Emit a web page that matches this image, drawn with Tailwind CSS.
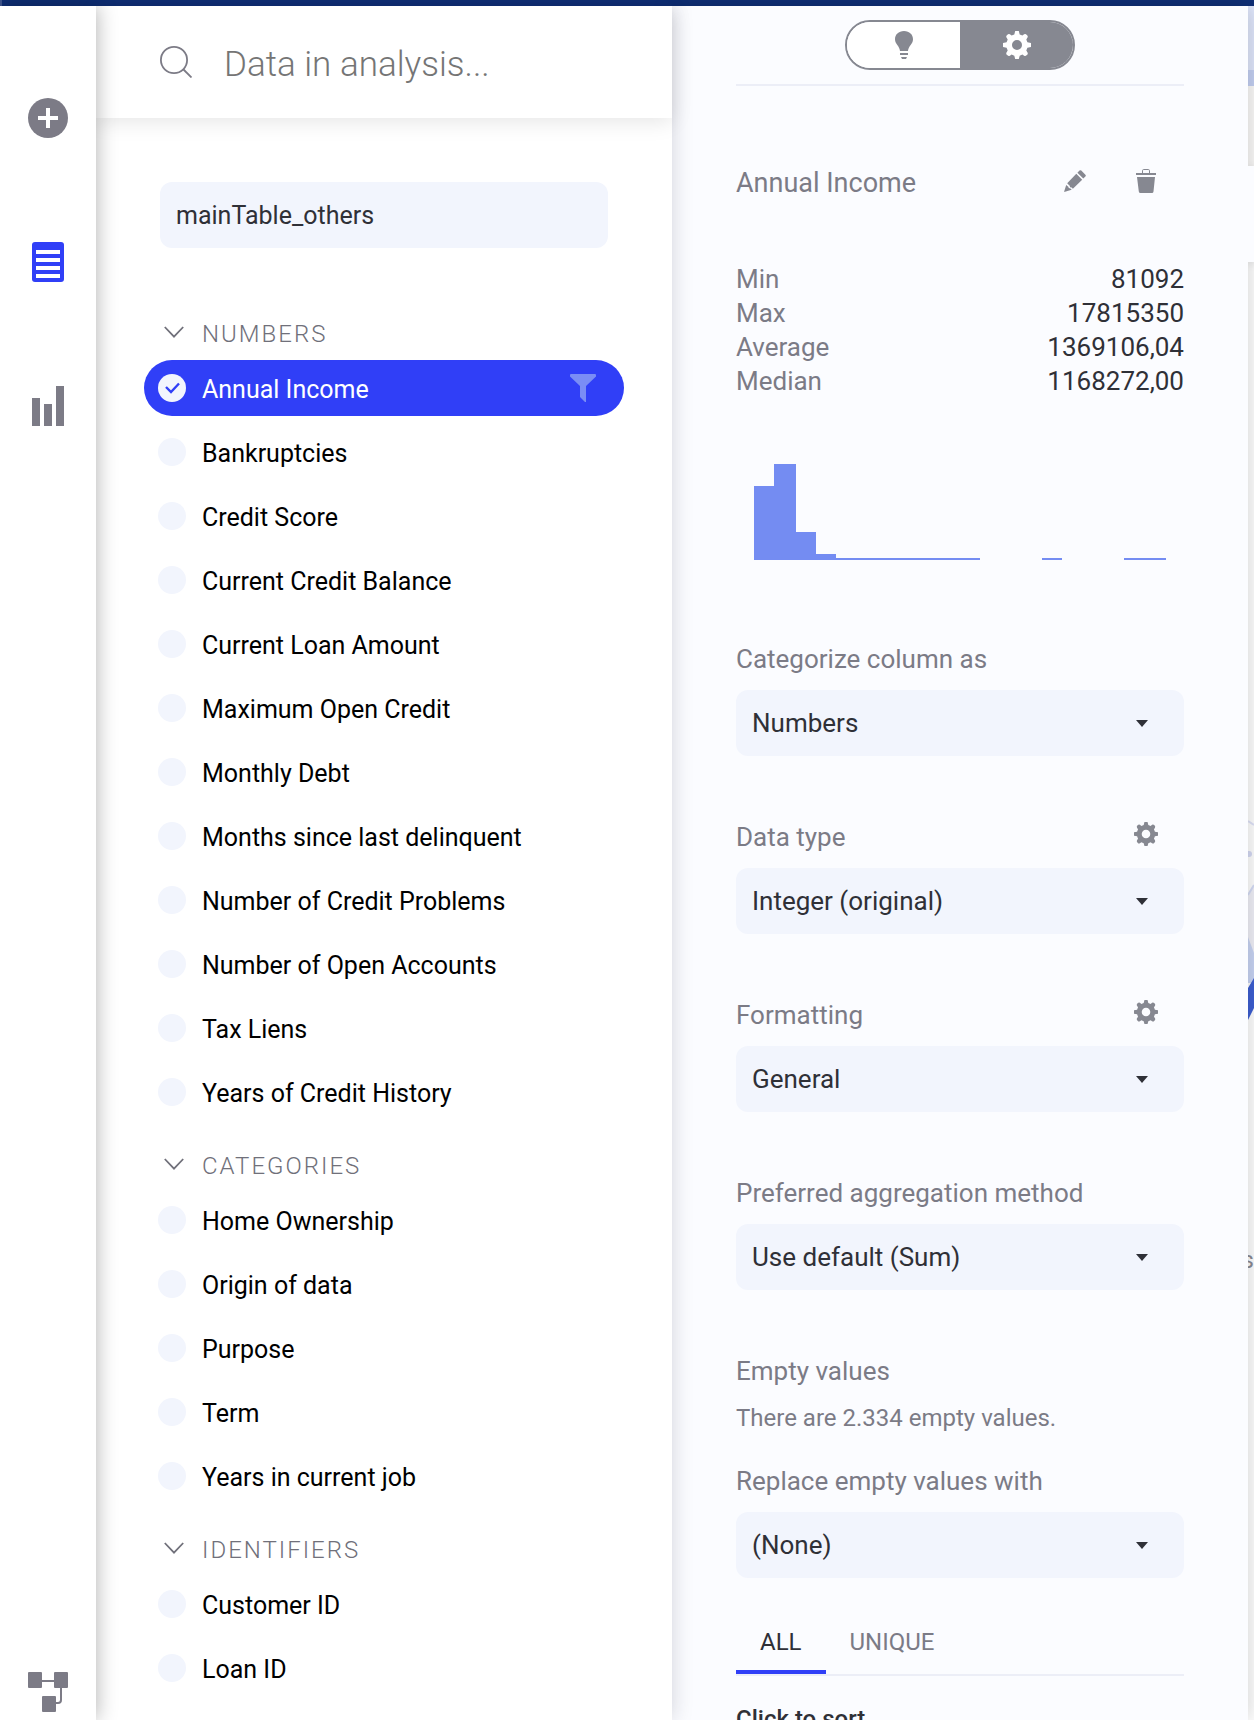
<!DOCTYPE html>
<html lang="en">
<head>
<meta charset="utf-8">
<meta name="viewport" content="width=device-width, initial-scale=1">
<title>Data in analysis</title>
<script src="https://cdn.jsdelivr.net/npm/@tailwindcss/browser@4"></script>
</head>
<body class="flex h-screen flex-col overflow-hidden bg-white font-[Roboto,sans-serif] text-[26px] leading-[34px] text-[#2f3037]">
<svg class="hidden" aria-hidden="true">
  <symbol id="chevron" viewBox="0 0 20 12"><path d="M.8 1 10 10.600 19.200 1" fill="none" stroke="currentColor" stroke-width="1.800"/></symbol>
  <symbol id="caret" viewBox="0 0 12 7"><path d="M0 0h12L6 7z" fill="currentColor"/></symbol>
  <symbol id="gear" viewBox="0 0 28 28"><path fill="currentColor" fill-rule="evenodd" d="M12.200 0h3.600l.9 3.500 2.700 1.100 1.700-1.400q1.500-.8 2.700.7 1.500 1.200.7 2.700l-1.200 1.900 1.100 2.800 3.600.8v3.800l-3.600.8-1.100 2.800 1.200 1.900q.8 1.500-.7 2.700-1.200 1.500-2.700.7l-1.700-1.200-2.700 1.100-.9 3.300h-3.600l-.9-3.300-2.700-1.100-1.700 1.200q-1.500.8-2.700-.7-1.500-1.200-.7-2.700l1.200-1.900-1.100-2.800L0 15.900v-3.800l3.600-.8 1.100-2.800-1.200-1.900q-.8-1.500.7-2.700 1.200-1.500 2.700-.7l1.700 1.400 2.700-1.100zM14 9a5 5 0 1 0 0 10a5 5 0 1 0 0-10z"/></symbol>
</svg>

<div class="h-1.5 shrink-0 border-l-2 border-[#3f5690] bg-[#0f2f76]"></div>

<div class="grid min-h-0 flex-1 grid-cols-[96px_minmax(0,1fr)_minmax(0,1fr)_6px] grid-rows-[minmax(0,1fr)]">
  <nav class="relative z-30 flex flex-col items-center bg-white pt-[92px] pb-2 text-[#7c7b86] shadow-[0_0_20px_rgba(0,0,0,0.32)]" aria-label="Main">
    <div class="flex flex-col gap-[104px]">
      <button type="button" aria-label="Add"><svg class="size-10" viewBox="0 0 40 40"><circle cx="20" cy="20" r="20" fill="currentColor"/><path d="M20 10v20M10 20h20" stroke="#fff" stroke-width="4"/></svg></button>
      <button type="button" aria-label="Data" class="text-[#303ff7]"><svg class="size-10" viewBox="0 0 40 40"><rect x="4" width="32" height="40" rx="3" fill="currentColor"/><path d="M8 10h24M8 18h24M8 26h24M8 34h24" stroke="#fff" stroke-width="4"/></svg></button>
      <button type="button" aria-label="Charts"><svg class="size-10" viewBox="0 0 40 40" fill="currentColor"><path d="M4 12h8v28H4zM16 18h8v22h-8zM28 0h8v40h-8z"/></svg></button>
    </div>
    <button type="button" aria-label="Model" class="mt-auto"><svg class="size-10" viewBox="0 0 40 40" fill="currentColor"><rect width="14" height="16" rx="1"/><rect x="26" width="14" height="16" rx="1"/><rect x="14" y="24" width="14" height="16" rx="1"/><path d="M14 9h12M33 16v12q0 3-3 3h-2" fill="none" stroke="currentColor" stroke-width="2"/></svg></button>
  </nav>

  <section class="relative z-20 flex flex-col bg-white shadow-[0_0_20px_rgba(20,24,50,0.18)]" aria-label="Columns">
    <div class="flex h-28 shrink-0 items-center gap-8 bg-white px-16 shadow-[0_4px_20px_rgba(0,0,0,0.1)]">
      <svg class="size-8 shrink-0 text-[#7c7b86]" viewBox="0 0 32 32" fill="none" stroke="currentColor" stroke-width="1.800"><circle cx="14" cy="14" r="13.100"/><path d="m23.500 23.500 8 8"/></svg>
      <input type="search" aria-label="Search data" placeholder="Data in analysis..." class="h-14 min-w-0 flex-1 pt-1 text-[35px] font-light outline-none placeholder:text-[#757575]">
    </div>
    <div class="flex min-h-0 flex-1 flex-col overflow-hidden px-12 pt-16 text-[25px]">
      <input type="text" aria-label="Table" value="mainTable_others" class="mx-4 mb-14 h-[66px] shrink-0 rounded-xl bg-[#f2f5fd] px-4 outline-none">
      <div class="flex flex-col gap-4 text-black">
        <section>
          <h2><button type="button" aria-expanded="true" class="flex h-14 items-center gap-[18px] pl-5 text-2xl font-light tracking-[2px] text-[#70707a]"><svg class="h-3 w-5"><use href="#chevron"/></svg><span class="pt-1">NUMBERS</span></button></h2>
          <ul class="flex flex-col gap-2">
            <li class="rounded-full bg-[#303ff7] text-white"><label class="flex h-14 items-center gap-4 pr-7 pl-3.5"><span class="relative size-7"><input type="checkbox" checked class="block size-7 appearance-none rounded-full bg-[#f2f5fd]"><svg class="absolute inset-0 size-7" viewBox="0 0 28 28" fill="none" stroke="#303ff7" stroke-width="2.400"><path d="m8 13 5 5 8-8.500"/></svg></span><span class="pt-1">Annual Income</span><svg class="ml-auto h-7 w-[26px]" viewBox="0 0 26 28" fill="#7a8df5"><path d="M1 0h24q1 0 1 1.300v1.200L16 12v16h-1l-5-5V12L0 2.500V1.300Q0 0 1 0z"/></svg></label></li>
            <li><label class="flex h-14 items-center gap-4 px-3.5"><input type="checkbox" class="size-7 appearance-none rounded-full bg-[#f2f5fd]"><span class="pt-1">Bankruptcies</span></label></li>
            <li><label class="flex h-14 items-center gap-4 px-3.5"><input type="checkbox" class="size-7 appearance-none rounded-full bg-[#f2f5fd]"><span class="pt-1">Credit Score</span></label></li>
            <li><label class="flex h-14 items-center gap-4 px-3.5"><input type="checkbox" class="size-7 appearance-none rounded-full bg-[#f2f5fd]"><span class="pt-1">Current Credit Balance</span></label></li>
            <li><label class="flex h-14 items-center gap-4 px-3.5"><input type="checkbox" class="size-7 appearance-none rounded-full bg-[#f2f5fd]"><span class="pt-1">Current Loan Amount</span></label></li>
            <li><label class="flex h-14 items-center gap-4 px-3.5"><input type="checkbox" class="size-7 appearance-none rounded-full bg-[#f2f5fd]"><span class="pt-1">Maximum Open Credit</span></label></li>
            <li><label class="flex h-14 items-center gap-4 px-3.5"><input type="checkbox" class="size-7 appearance-none rounded-full bg-[#f2f5fd]"><span class="pt-1">Monthly Debt</span></label></li>
            <li><label class="flex h-14 items-center gap-4 px-3.5"><input type="checkbox" class="size-7 appearance-none rounded-full bg-[#f2f5fd]"><span class="pt-1">Months since last delinquent</span></label></li>
            <li><label class="flex h-14 items-center gap-4 px-3.5"><input type="checkbox" class="size-7 appearance-none rounded-full bg-[#f2f5fd]"><span class="pt-1">Number of Credit Problems</span></label></li>
            <li><label class="flex h-14 items-center gap-4 px-3.5"><input type="checkbox" class="size-7 appearance-none rounded-full bg-[#f2f5fd]"><span class="pt-1">Number of Open Accounts</span></label></li>
            <li><label class="flex h-14 items-center gap-4 px-3.5"><input type="checkbox" class="size-7 appearance-none rounded-full bg-[#f2f5fd]"><span class="pt-1">Tax Liens</span></label></li>
            <li><label class="flex h-14 items-center gap-4 px-3.5"><input type="checkbox" class="size-7 appearance-none rounded-full bg-[#f2f5fd]"><span class="pt-1">Years of Credit History</span></label></li>
          </ul>
        </section>
        <section>
          <h2><button type="button" aria-expanded="true" class="flex h-14 items-center gap-[18px] pl-5 text-2xl font-light tracking-[2px] text-[#70707a]"><svg class="h-3 w-5"><use href="#chevron"/></svg><span class="pt-1">CATEGORIES</span></button></h2>
          <ul class="flex flex-col gap-2">
            <li><label class="flex h-14 items-center gap-4 px-3.5"><input type="checkbox" class="size-7 appearance-none rounded-full bg-[#f2f5fd]"><span class="pt-1">Home Ownership</span></label></li>
            <li><label class="flex h-14 items-center gap-4 px-3.5"><input type="checkbox" class="size-7 appearance-none rounded-full bg-[#f2f5fd]"><span class="pt-1">Origin of data</span></label></li>
            <li><label class="flex h-14 items-center gap-4 px-3.5"><input type="checkbox" class="size-7 appearance-none rounded-full bg-[#f2f5fd]"><span class="pt-1">Purpose</span></label></li>
            <li><label class="flex h-14 items-center gap-4 px-3.5"><input type="checkbox" class="size-7 appearance-none rounded-full bg-[#f2f5fd]"><span class="pt-1">Term</span></label></li>
            <li><label class="flex h-14 items-center gap-4 px-3.5"><input type="checkbox" class="size-7 appearance-none rounded-full bg-[#f2f5fd]"><span class="pt-1">Years in current job</span></label></li>
          </ul>
        </section>
        <section>
          <h2><button type="button" aria-expanded="true" class="flex h-14 items-center gap-[18px] pl-5 text-2xl font-light tracking-[2px] text-[#70707a]"><svg class="h-3 w-5"><use href="#chevron"/></svg><span class="pt-1">IDENTIFIERS</span></button></h2>
          <ul class="flex flex-col gap-2">
            <li><label class="flex h-14 items-center gap-4 px-3.5"><input type="checkbox" class="size-7 appearance-none rounded-full bg-[#f2f5fd]"><span class="pt-1">Customer ID</span></label></li>
            <li><label class="flex h-14 items-center gap-4 px-3.5"><input type="checkbox" class="size-7 appearance-none rounded-full bg-[#f2f5fd]"><span class="pt-1">Loan ID</span></label></li>
          </ul>
        </section>
      </div>
    </div>
  </section>

  <section class="relative z-10 flex flex-col bg-[#fbfcff] px-16 shadow-[0_0_20px_rgba(0,0,0,0.2)]" aria-label="Column settings">
    <div class="flex h-20 shrink-0 justify-center border-b-2 border-[#eceef7] pt-3.5">
      <div class="flex h-[50px] w-[230px] overflow-hidden rounded-full border-2 border-[#868891]">
        <button type="button" aria-label="Insights" class="flex flex-1 items-center justify-center bg-white text-[#868891]"><svg class="h-7 w-[18px]" viewBox="0 0 18 28" fill="currentColor"><path d="M9 0c5.500 0 9 3.600 9 8.300 0 5-4.600 6.700-5 11.700H5C4.600 15 0 13.300 0 8.300 0 3.600 3.500 0 9 0zM5 22h8v2H5zM6 26h6l-1 2H7z"/></svg></button>
        <button type="button" aria-label="Settings" class="flex flex-1 items-center justify-center bg-[#868891] text-white"><svg class="size-7"><use href="#gear"/></svg></button>
      </div>
    </div>

    <div class="flex min-h-0 flex-1 flex-col overflow-hidden pt-20 text-[#7b7b86]">
      <div class="flex h-[30px] shrink-0 items-center">
        <h1 class="pt-1 text-[27px]">Annual Income</h1>
        <button type="button" aria-label="Rename" class="ml-auto text-[#868891]"><svg class="size-[22px]" viewBox="0 0 22 22" fill="currentColor"><path d="m17.300.6 4.100 4.100q.9.900 0 1.800l-2.100 2.100-5.900-5.900 2.100-2.100q.9-.9 1.800 0zM12.300 3.800l5.900 5.900-9.300 9.100-1.300-1.200-1.500-.3-.4-1.600-2.500-2.500zM2.200 14.900l2.100 1.800.5 1.400 1.600.4 1.300 1.200L0 22z"/></svg></button>
        <button type="button" aria-label="Delete" class="mr-7 ml-[50px] text-[#868891]"><svg class="h-6 w-5" viewBox="0 0 20 24" fill="currentColor"><path d="M0 4h20v2H0zM1 8h18l-1.500 14.500Q17.300 24 16 24H4.500Q3 24 2.800 22.500z"/><path d="M6.500 4V1.700q0-1.200 1.200-1.200h4.600q1.200 0 1.200 1.200V4" fill="none" stroke="currentColor"/></svg></button>
      </div>

      <dl class="mt-[66px] shrink-0">
        <div class="flex justify-between"><dt>Min</dt><dd class="text-[#2f3037]">81092</dd></div>
        <div class="flex justify-between"><dt>Max</dt><dd class="text-[#2f3037]">17815350</dd></div>
        <div class="flex justify-between"><dt>Average</dt><dd class="text-[#2f3037]">1369106,04</dd></div>
        <div class="flex justify-between"><dt>Median</dt><dd class="text-[#2f3037]">1168272,00</dd></div>
      </dl>

      <svg class="mt-[66px] h-24 w-full shrink-0" viewBox="0 0 448 96" preserveAspectRatio="none" shape-rendering="crispEdges" fill="#748cf2" role="img" aria-label="Distribution of Annual Income"><path d="M18 96V22h20V0h22v68h20v22h20v4h144v2zM306 94h20v2h-20zM388 94h42v2h-42z"/></svg>

      <div class="mt-[82px] flex shrink-0 flex-col gap-16">
        <div class="flex flex-col gap-3.5">
          <label for="category">Categorize column as</label>
          <div class="relative"><select id="category" class="h-[66px] w-full appearance-none rounded-xl bg-[#f2f5fd] px-4 text-[#2f3037] outline-none"><option>Numbers</option></select><svg class="pointer-events-none absolute top-[30px] right-9 h-[7px] w-3 text-[#2f3037]"><use href="#caret"/></svg></div>
        </div>
        <div class="flex flex-col gap-3.5">
          <div class="flex items-start justify-between pr-6.5"><label for="datatype">Data type</label><button type="button" aria-label="Data type settings" class="pt-0.5 text-[#868891]"><svg class="size-6"><use href="#gear"/></svg></button></div>
          <div class="relative"><select id="datatype" class="h-[66px] w-full appearance-none rounded-xl bg-[#f2f5fd] px-4 text-[#2f3037] outline-none"><option>Integer (original)</option></select><svg class="pointer-events-none absolute top-[30px] right-9 h-[7px] w-3 text-[#2f3037]"><use href="#caret"/></svg></div>
        </div>
        <div class="flex flex-col gap-3.5">
          <div class="flex items-start justify-between pr-6.5"><label for="formatting">Formatting</label><button type="button" aria-label="Formatting settings" class="pt-0.5 text-[#868891]"><svg class="size-6"><use href="#gear"/></svg></button></div>
          <div class="relative"><select id="formatting" class="h-[66px] w-full appearance-none rounded-xl bg-[#f2f5fd] px-4 text-[#2f3037] outline-none"><option>General</option></select><svg class="pointer-events-none absolute top-[30px] right-9 h-[7px] w-3 text-[#2f3037]"><use href="#caret"/></svg></div>
        </div>
        <div class="flex flex-col gap-3.5">
          <label for="aggregation">Preferred aggregation method</label>
          <div class="relative"><select id="aggregation" class="h-[66px] w-full appearance-none rounded-xl bg-[#f2f5fd] px-4 text-[#2f3037] outline-none"><option>Use default (Sum)</option></select><svg class="pointer-events-none absolute top-[30px] right-9 h-[7px] w-3 text-[#2f3037]"><use href="#caret"/></svg></div>
        </div>
        <div class="flex flex-col">
          <h2>Empty values</h2>
          <p class="mt-3.5 text-2xl leading-8">There are 2.334 empty values.</p>
          <label for="replace" class="mt-[30px] mb-3.5">Replace empty values with</label>
          <div class="relative"><select id="replace" class="h-[66px] w-full appearance-none rounded-xl bg-[#f2f5fd] px-4 text-[#2f3037] outline-none"><option>(None)</option></select><svg class="pointer-events-none absolute top-[30px] right-9 h-[7px] w-3 text-[#2f3037]"><use href="#caret"/></svg></div>
        </div>
      </div>

      <div role="tablist" class="mt-8 flex shrink-0 border-b-2 border-[#eceef7] text-2xl">
        <button type="button" role="tab" aria-selected="true" class="h-16 border-b-4 border-[#303ff7] px-6 pt-1 text-[#2f3037]">ALL</button>
        <button type="button" role="tab" aria-selected="false" class="h-16 border-b-4 border-transparent px-6 pt-1">UNIQUE</button>
      </div>
      <p class="mt-[26px] shrink-0 text-2xl leading-[34px] font-medium text-[#2f3037]">Click to sort</p>
    </div>
  </section>

  <main class="flex flex-col overflow-hidden bg-white" aria-label="Canvas">
    <div class="h-16 shrink-0 bg-[#dfe6fb]"></div>
    <div class="h-4 shrink-0 bg-[#c4d0f3]"></div>
    <div class="h-20 shrink-0 bg-[#fbfaf9]"></div>
    <div class="relative z-20 h-24 shrink-0 bg-[#fbfcff] shadow-[0_2px_8px_rgba(0,0,0,0.15)]"></div>
    <svg class="mt-[558px] h-[200px] w-1.5 shrink-0" viewBox="0 0 6 200"><path d="M0 1l6 4" stroke="#dfe3f8" stroke-width="2"/><circle cx="1" cy="34" r="3" fill="#d5daf5"/><path d="M0 75l6-10v90H0z" fill="#f0f0f8"/><path d="M0 75l6-10" stroke="#d5dcf6" stroke-width="2"/><path d="M0 117l6 16v30H0z" fill="#c9d5f5"/><path d="M0 168l6-10v30L0 200z" fill="#3d5fd3"/></svg>
    <div class="mt-56 flex shrink-0 justify-end text-2xl leading-8 text-[#8b8b94]">s</div>
  </main>
</div>
</body>
</html>
